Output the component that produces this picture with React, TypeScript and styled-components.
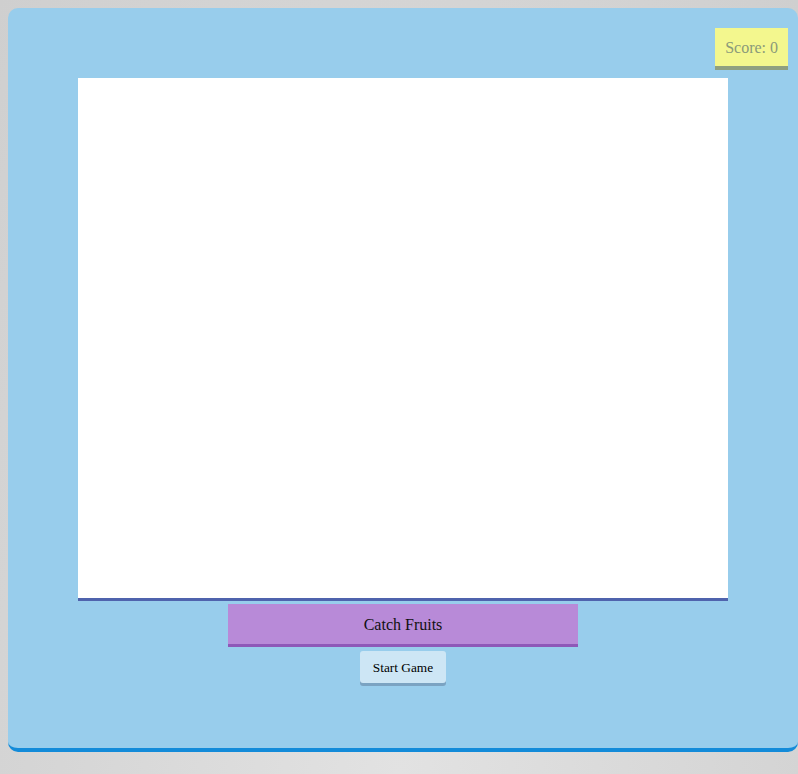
import React from "react";
import styled, { createGlobalStyle } from "styled-components";

const Global = createGlobalStyle`
  html {
    min-height: 100%;
    background: radial-gradient(ellipse at 50% 100%, #e2e2e2 0%, #d6d6d6 60%, #cfcfcf 100%);
  }
  body {
    margin: 8px 0 0 8px;
    font-family: "Liberation Serif", "Times New Roman", serif;
    overflow: hidden;
  }
`;

const Container = styled.div`
  position: relative;
  box-sizing: border-box;
  width: 790px;
  height: 744px;
  background: #98cdec;
  border-radius: 10px;
  border-bottom: 4px solid #138bd9;
  padding-top: 70px;
  display: flex;
  flex-direction: column;
  align-items: center;
`;

const Score = styled.div`
  position: absolute;
  top: 20px;
  right: 10px;
  background: #f3f78e;
  border-bottom: 4px solid #8fa080;
  color: #8a9a7a;
  font-size: 16px;
  line-height: 18px;
  padding: 11px 10px 9px;
`;

const Canvas = styled.div`
  width: 650px;
  height: 520px;
  background: #ffffff;
  border-bottom: 3px solid #4f63ad;
`;

const Title = styled.div`
  box-sizing: border-box;
  margin-top: 3px;
  width: 350px;
  height: 40px;
  padding-top: 2px;
  background: #b88ad8;
  border-bottom: 3px solid #8e58b8;
  display: flex;
  align-items: center;
  justify-content: center;
  box-sizing: content-box;
  height: 38px;
  font-size: 16px;
  color: #111;
`;

const StartButton = styled.button`
  margin-top: 4px;
  width: 86px;
  height: 32px;
  background: #cde6f5;
  border: none;
  border-radius: 3px;
  box-shadow: 0 3px 0 #7ba3c2;
  font-family: "Liberation Serif", "Times New Roman", serif;
  font-size: 13.33px;
  color: #000;
  padding: 2px 0 0;
  cursor: pointer;
`;

export default function App() {
  return (
    <>
      <Global />
      <Container>
        <Score>Score: 0</Score>
        <Canvas />
        <Title>Catch Fruits</Title>
        <StartButton>Start Game</StartButton>
      </Container>
    </>
  );
}
